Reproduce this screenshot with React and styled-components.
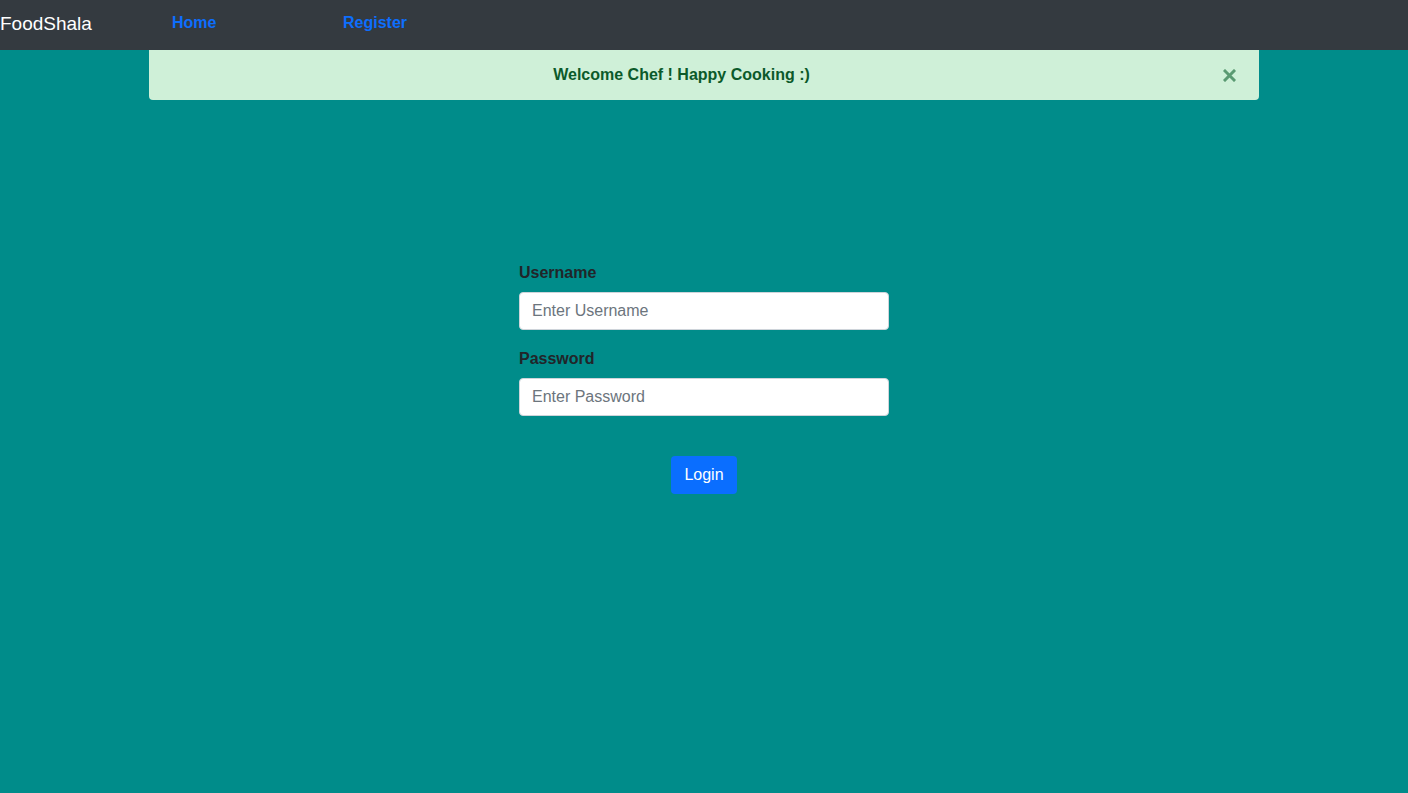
import React from "react";
import styled, { createGlobalStyle } from "styled-components";

const GlobalStyle = createGlobalStyle`
  html, body {
    margin: 0;
    padding: 0;
    min-height: 100%;
    background: #008c8a;
    font-family: "Liberation Sans", Arial, Helvetica, sans-serif;
  }
  * { box-sizing: border-box; }
`;

const Page = styled.div`
  min-height: 793px;
  background: #008c8a;
`;

const NavBar = styled.nav`
  height: 50px;
  background: #343a40;
  display: flex;
  align-items: center;
`;

const Brand = styled.a`
  color: #fff;
  font-size: 19px;
  text-decoration: none;
  width: 172px;
  margin-top: -3px;
`;

const NavLink = styled.a`
  color: #0d6efd;
  font-weight: bold;
  font-size: 16px;
  text-decoration: none;
  width: ${(p) => p.$w || "auto"};
  margin-top: -5px;
`;

const Container = styled.div`
  width: 1110px;
  margin: 0 auto;
`;

const Alert = styled.div`
  height: 50px;
  background: #cff0d8;
  border-radius: 0 0 4px 4px;
  display: flex;
  align-items: center;
  justify-content: center;
  padding-right: 45px;
  position: relative;
  color: #0b5a2a;
  font-weight: bold;
  font-size: 16px;
`;

const Close = styled.button`
  position: absolute;
  right: 21px;
  top: 16px;
  width: 18px;
  height: 18px;
  padding: 0;
  border: 0;
  background: transparent;
  display: flex;
  align-items: center;
  justify-content: center;
  cursor: pointer;
`;

const Form = styled.form`
  width: 370px;
  margin: 164px auto 0;
  display: flex;
  flex-direction: column;
`;

const Label = styled.label`
  color: #212529;
  font-weight: bold;
  font-size: 16px;
  margin-bottom: 10px;
`;

const Input = styled.input`
  height: 38px;
  width: 100%;
  border: 1px solid #ced4da;
  border-radius: 4px;
  padding: 0 12px;
  font-size: 16px;
  font-family: inherit;
  color: #495057;
  background: #fff;
  margin-bottom: 20px;
  outline: none;
  &::placeholder {
    color: #6c757d;
  }
`;

const Button = styled.button`
  align-self: center;
  margin-top: 20px;
  width: 66px;
  height: 38px;
  border: 0;
  border-radius: 4px;
  background: #0a6eff;
  color: #fff;
  font-size: 16px;
  font-family: inherit;
  cursor: pointer;
`;

export default function App() {
  return (
    <Page>
      <GlobalStyle />
      <NavBar>
        <Brand href="#">FoodShala</Brand>
        <NavLink href="#" $w="171px">Home</NavLink>
        <NavLink href="#">Register</NavLink>
      </NavBar>
      <Container>
        <Alert>
          Welcome Chef ! Happy Cooking :)
          <Close aria-label="Close">
            <svg width="13" height="13" viewBox="0 0 13 13">
              <path d="M2 2L11 11M11 2L2 11" stroke="#5a9a72" strokeWidth="3" strokeLinecap="square" />
            </svg>
          </Close>
        </Alert>
      </Container>
      <Form onSubmit={(e) => e.preventDefault()}>
        <Label>Username</Label>
        <Input placeholder="Enter Username" />
        <Label>Password</Label>
        <Input type="password" placeholder="Enter Password" />
        <Button type="submit">Login</Button>
      </Form>
    </Page>
  );
}
